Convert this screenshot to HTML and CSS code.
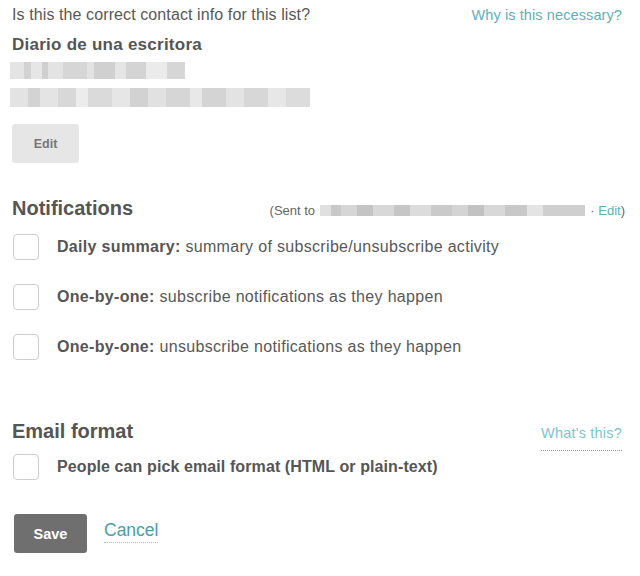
FILE: index.html
```html
<!DOCTYPE html>
<html>
<head>
<meta charset="utf-8">
<link rel="stylesheet" href="styles.css">
</head>
<body>
<div class="page">
  <div class="top">
    <span class="question">Is this the correct contact info for this list?</span>
    <a class="link small">Why is this necessary?</a>
  </div>
  <div class="org">Diario de una escritora</div>
  <div class="blur blur1"></div>
  <div class="blur blur2"></div>
  <button class="btn-edit">Edit</button>

  <div class="section-head notif">
    <h2>Notifications</h2>
    <span class="sent">(Sent to <span class="blur blur3"></span> · <a class="link">Edit</a>)</span>
  </div>
  <div class="opts">
    <label class="opt"><span class="box"></span><span><b>Daily summary:</b> summary of subscribe/unsubscribe activity</span></label>
    <label class="opt"><span class="box"></span><span><b>One-by-one:</b> subscribe notifications as they happen</span></label>
    <label class="opt"><span class="box"></span><span><b>One-by-one:</b> unsubscribe notifications as they happen</span></label>
  </div>

  <div class="section-head email">
    <h2>Email format</h2>
    <a class="link small dotted">What's this?</a>
  </div>
  <label class="opt single"><span class="box"></span><span><b>People can pick email format (HTML or plain-text)</b></span></label>

  <div class="actions">
    <button class="btn-save">Save</button>
    <a class="link cancel">Cancel</a>
  </div>
</div>
</body>
</html>
```
FILE: styles.css
```css
* { box-sizing: border-box; }
html, body { margin: 0; padding: 0; background: #fff; }
body { font-family: "Liberation Sans", Arial, sans-serif; color: #585858; }
.page { padding: 0 18px 0 12px; }
.link { color: #4ea5ad; text-decoration: none; }
.small { font-size: 14.5px; letter-spacing: 0.1px; }
.top { display: flex; justify-content: space-between; align-items: baseline; padding-top: 5px; height: 30px; line-height: 20px; }
.question { font-size: 16px; letter-spacing: 0.1px; color: #585858; }
.top .link { color: #5eb0b8; }
.org { font-size: 17px; letter-spacing: 0.25px; font-weight: bold; color: #555; margin-top: 3px; height: 24px; line-height: 24px; }
.blur { display: block; }
.blur1 { margin-top: 5px; margin-left: -2px; width: 175px; height: 17px;
  background: linear-gradient(90deg, #e4e4e4 0 8%, #d2d2d2 8% 12%, #e6e6e6 12% 18%, #cfcfcf 18% 22%, #e3e3e3 22% 30%, #d6d6d6 30% 44%, #e2e2e2 44% 48%, #d0d0d0 48% 60%, #e5e5e5 60% 66%, #d4d4d4 66% 78%, #ebebeb 78% 90%, #d6d6d6 90% 100%); }
.blur2 { margin-top: 9px; margin-left: -2px; width: 300px; height: 19px;
  background: linear-gradient(90deg, #e3e3e3 0 6%, #d3d3d3 6% 10%, #e4e4e4 10% 16%, #d8d8d8 16% 22%, #ececec 22% 26%, #dadada 26% 34%, #e6e6e6 34% 40%, #d2d2d2 40% 46%, #e1e1e1 46% 52%, #d6d6d6 52% 60%, #e8e8e8 60% 64%, #d4d4d4 64% 72%, #e3e3e3 72% 78%, #d7d7d7 78% 86%, #e7e7e7 86% 92%, #dcdcdc 92% 100%); }
.btn-edit { display: block; margin-top: 17px; width: 67px; height: 39px; border: 0; border-radius: 3px;
  background: #e6e6e6; color: #777; font-family: inherit; font-size: 12.5px; font-weight: bold; padding: 0; }
.section-head { display: flex; align-items: baseline; justify-content: space-between; height: 22px; }
.section-head h2 { margin: 0; font-size: 20px; font-weight: bold; color: #555; line-height: 22px; }
.notif { margin-top: 34px; }
.sent { font-size: 13px; color: #666; display: flex; align-items: center; margin-right: -3px; white-space: pre; }
.blur3 { display: inline-block; width: 265px; height: 11px; margin: 0 2px 0 1px;
  background: linear-gradient(90deg, #e0e0e0 0 4%, #c8c8c8 4% 8%, #d6d6d6 8% 14%, #c4c4c4 14% 20%, #d8d8d8 20% 28%, #c6c6c6 28% 34%, #dcdcdc 34% 42%, #cacaca 42% 50%, #d4d4d4 50% 56%, #c2c2c2 56% 62%, #d8d8d8 62% 70%, #c8c8c8 70% 78%, #e4e4e4 78% 84%, #cfcfcf 84% 100%); }
.sent .link { color: #5eb0b8; }
.opts { margin-top: 15px; display: flex; flex-direction: column; gap: 24px; }
.opt { display: flex; align-items: center; gap: 18px; height: 26px; font-size: 16px; letter-spacing: 0.32px; color: #585858; padding-left: 1px; white-space: nowrap; }
.opt b { color: #555; }
.box { width: 26px; height: 26px; border: 1px solid #cdcdcd; border-radius: 4px; background: #fff; flex: none; }
.email { margin-top: 60px; }
.email .link { color: #7fc4cc; border-bottom: 1px dotted #999; padding-bottom: 6px; line-height: 22px; letter-spacing: 0.2px; }
.single { margin-top: 12px; letter-spacing: 0.1px; }
.actions { margin-top: 34px; display: flex; align-items: center; gap: 17px; padding-left: 2px; }
.btn-save { width: 73px; height: 39px; border: 0; border-radius: 3px; background: #6f6f6f; color: #fff;
  font-family: inherit; font-size: 14.5px; font-weight: bold; padding: 0; }
.cancel { font-size: 17.5px; color: #4a9ea6; border-bottom: 1px dotted #8cc; padding-bottom: 1px; margin-top: -4px; }
```
